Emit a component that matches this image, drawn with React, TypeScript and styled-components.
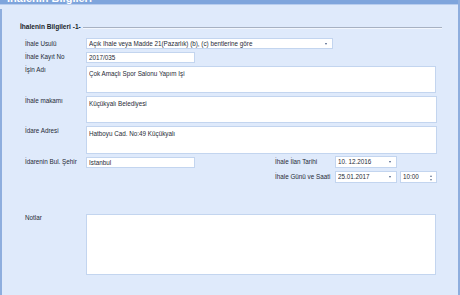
import styled, { createGlobalStyle } from "styled-components";

const GlobalStyle = createGlobalStyle`
  html, body {
    margin: 0;
    padding: 0;
    background: #dfeafb;
  }
  * {
    box-sizing: border-box;
  }
`;

const Window = styled.div`
  width: 460px;
  height: 295px;
  background: #dfeafb;
  border-right: 2px solid #8eaede;
  font-family: "Liberation Sans", Arial, sans-serif;
  font-size: 6.3px;
  color: #262b36;
  overflow: hidden;
  display: flex;
  flex-direction: column;
`;

const TitleBar = styled.div`
  height: 5px;
  background: #7fa5dc;
  border-bottom: 1px solid #b8cdee;
  overflow: hidden;
  padding-left: 7px;
`;

const TitleText = styled.div`
  margin-top: -7px;
  font-size: 11px;
  font-weight: bold;
  color: #ffffff;
  line-height: 11px;
`;

const Body = styled.div`
  flex: 1;
  margin-top: 4px;
  border-left: 2px solid #8eaede;
  padding: 12px 16px 0 18px;
`;

const GroupHeader = styled.div`
  display: flex;
  align-items: center;
  gap: 2px;
  height: 10px;
`;

const GroupTitle = styled.span`
  font-weight: bold;
  font-size: 6.6px;
  color: #1a1f2a;
  white-space: nowrap;
`;

const GroupLine = styled.div`
  flex: 1;
  height: 2px;
  margin-top: 3px;
  border-top: 1px solid #a7b1c2;
  border-bottom: 1px solid #f2f6fd;
`;

const Form = styled.div`
  display: flex;
  flex-direction: column;
  gap: 3px;
  padding-left: 5px;
  margin-top: 7px;
`;

const Row = styled.div<{ $mt?: number }>`
  display: flex;
  align-items: flex-start;
  margin-top: ${(p) => p.$mt ?? 0}px;
`;

const Label = styled.div<{ $w?: number; $h?: number }>`
  width: ${(p) => p.$w ?? 61}px;
  flex-shrink: 0;
  line-height: ${(p) => p.$h ?? 11}px;
  white-space: nowrap;
`;

const Box = styled.div<{ $w: number; $h: number }>`
  width: ${(p) => p.$w}px;
  height: ${(p) => p.$h}px;
  background: #ffffff;
  border: 1px solid #c3d5ef;
  display: flex;
  align-items: flex-start;
  padding: 1px 2px 0;
  line-height: 8px;
  white-space: nowrap;
  overflow: hidden;
  position: relative;
`;

const MultiBox = styled(Box)`
  padding-top: 3px;
`;

const BoxText = styled.span`
  flex: 1;
  overflow: hidden;
`;

const DropArrow = styled.span`
  width: 0;
  height: 0;
  margin: 3px 3px 0 0;
  border-left: 1.5px solid transparent;
  border-right: 1.5px solid transparent;
  border-top: 2px solid #4a5f86;
`;

const Spin = styled.span`
  display: flex;
  flex-direction: column;
  gap: 2px;
  margin: 2px 2px 0 0;
`;

const SpinUp = styled.span`
  width: 0;
  height: 0;
  border-left: 1.5px solid transparent;
  border-right: 1.5px solid transparent;
  border-bottom: 2px solid #6a7a96;
`;

const SpinDown = styled.span`
  width: 0;
  height: 0;
  border-left: 1.5px solid transparent;
  border-right: 1.5px solid transparent;
  border-top: 2px solid #6a7a96;
`;

const Split = styled.div`
  display: flex;
  align-items: flex-start;
`;

const RightBlock = styled.div`
  margin-left: 80px;
  display: flex;
  flex-direction: column;
  gap: 3px;
  margin-top: -1px;
`;

const RightRow = styled.div`
  display: flex;
  align-items: flex-start;
  gap: 3px;
`;

const DateBox = ({ value }: { value: string }) => (
  <Box $w={62} $h={12}>
    <BoxText>{value}</BoxText>
    <DropArrow />
  </Box>
);

export default function App() {
  return (
    <>
      <GlobalStyle />
      <Window>
        <TitleBar>
          <TitleText>İhalenin Bilgileri</TitleText>
        </TitleBar>
        <Body>
          <GroupHeader>
            <GroupTitle>İhalenin Bilgileri -1-</GroupTitle>
            <GroupLine />
          </GroupHeader>
          <Form>
            <Row>
              <Label>İhale Usulü</Label>
              <Box $w={247} $h={11}>
                <BoxText>Açık İhale veya Madde 21(Pazarlık) (b), (c) bentlerine göre</BoxText>
                <DropArrow />
              </Box>
            </Row>
            <Row>
              <Label $h={10}>İhale Kayıt No</Label>
              <Box $w={109} $h={11}>
                <BoxText>2017/035</BoxText>
              </Box>
            </Row>
            <Row>
              <Label $h={8}>İşin Adı</Label>
              <MultiBox $w={350} $h={27}>
                <BoxText>Çok Amaçlı Spor Salonu Yapım İşi</BoxText>
              </MultiBox>
            </Row>
            <Row>
              <Label $h={10}>İhale makamı</Label>
              <MultiBox $w={351} $h={27}>
                <BoxText>Küçükyalı Belediyesi</BoxText>
              </MultiBox>
            </Row>
            <Row>
              <Label $h={10}>İdare Adresi</Label>
              <MultiBox $w={351} $h={28}>
                <BoxText>Hatboyu Cad. No:49 Küçükyalı</BoxText>
              </MultiBox>
            </Row>
            <Row>
              <Label $h={9}>İdarenin Bul. Şehir</Label>
              <Split>
                <Box $w={109} $h={11}>
                  <BoxText>İstanbul</BoxText>
                </Box>
                <RightBlock>
                  <RightRow>
                    <Label $w={57} $h={12}>İhale İlan Tarihi</Label>
                    <DateBox value="10. 12.2016" />
                  </RightRow>
                  <RightRow>
                    <Label $w={57} $h={12}>İhale Günü ve Saati</Label>
                    <DateBox value="25.01.2017" />
                    <Box $w={37} $h={12}>
                      <BoxText>10:00</BoxText>
                      <Spin>
                        <SpinUp />
                        <SpinDown />
                      </Spin>
                    </Box>
                  </RightRow>
                </RightBlock>
              </Split>
            </Row>
            <Row $mt={28}>
              <Label $h={8}>Notlar</Label>
              <MultiBox $w={350} $h={61}>
                <BoxText />
              </MultiBox>
            </Row>
          </Form>
        </Body>
      </Window>
    </>
  );
}
